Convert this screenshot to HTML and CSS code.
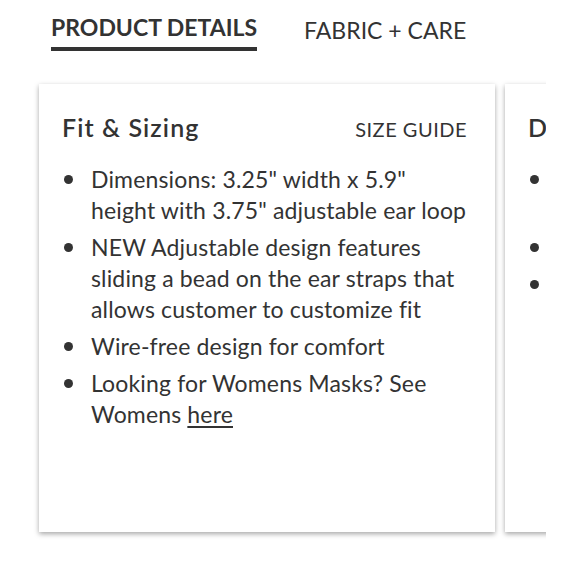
FILE: index.html
```html
<!DOCTYPE html>
<html lang="en">
<head>
<meta charset="utf-8">
<title>Product details</title>
<link rel="stylesheet" href="styles.css">
</head>
<body>
<nav class="tabs">
  <div class="tab active">PRODUCT DETAILS</div>
  <div class="tab">FABRIC + CARE</div>
</nav>
<div class="cards">
  <section class="card">
    <header class="card-head">
      <h2 class="card-title">Fit &amp; Sizing</h2>
      <a class="guide">SIZE GUIDE</a>
    </header>
    <ul class="list">
      <li><span>Dimensions: 3.25" width x 5.9" height with 3.75" adjustable ear loop</span></li>
      <li><span>NEW Adjustable design features sliding a bead on the ear straps that allows customer to customize fit</span></li>
      <li><span>Wire-free design for comfort</span></li>
      <li><span>Looking for Womens Masks? See Womens <a class="link">here</a></span></li>
    </ul>
  </section>
  <section class="card">
    <header class="card-head">
      <h2 class="card-title">Details</h2>
    </header>
    <ul class="list">
      <li><span>Reusable, washable face mask with two layers</span></li>
      <li><span>Soft cotton</span></li>
      <li><span>Imported</span></li>
    </ul>
  </section>
</div>
</body>
</html>
```
FILE: styles.css
```css
* { box-sizing: border-box; }
body {
  margin: 0;
  background: #fff;
  color: #333;
  font-family: Lato, "Noto Sans", sans-serif;
}
.tabs {
  display: flex;
  align-items: flex-start;
  gap: 47px;
  padding: 14px 0 0 51px;
}
.tab {
  font-size: 23px;
  line-height: 26px;
  color: #333;
  padding-top: 3px;
}
.tab.active {
  font-weight: 700;
  padding-top: 0;
  padding-bottom: 7px;
  border-bottom: 4px solid #333;
}
.cards {
  display: flex;
  gap: 10px;
  width: 516px;
  margin: 29px 0 0 30px;
  padding: 4px 0 8px 9px;
  overflow: hidden;
}
.card {
  flex: 0 0 456px;
  height: 448px;
  background: #fff;
  box-shadow: 0 2px 5px rgba(0, 0, 0, 0.35);
  padding: 28px 28px 0 23px;
}
.card-head {
  display: flex;
  justify-content: space-between;
  align-items: baseline;
  margin-bottom: 22px;
}
.card-title {
  margin: 0;
  font-size: 25px;
  font-weight: 600;
  letter-spacing: 1.1px;
  line-height: 30px;
  white-space: nowrap;
}
.guide {
  font-size: 20px;
  letter-spacing: 0.5px;
  color: #333;
}
.list {
  list-style: none;
  margin: 0;
  padding: 0;
  display: flex;
  flex-direction: column;
  gap: 6px;
}
.list li {
  display: grid;
  grid-template-columns: 29px 1fr;
  font-size: 23px;
  line-height: 31px;
  letter-spacing: 0.15px;
}
.list li::before {
  content: "";
  width: 9px;
  height: 9px;
  border-radius: 50%;
  background: #333;
  margin: 11px 0 0 2px;
}
.link {
  text-decoration: underline;
  text-underline-offset: 3px;
  color: #333;
}
```
